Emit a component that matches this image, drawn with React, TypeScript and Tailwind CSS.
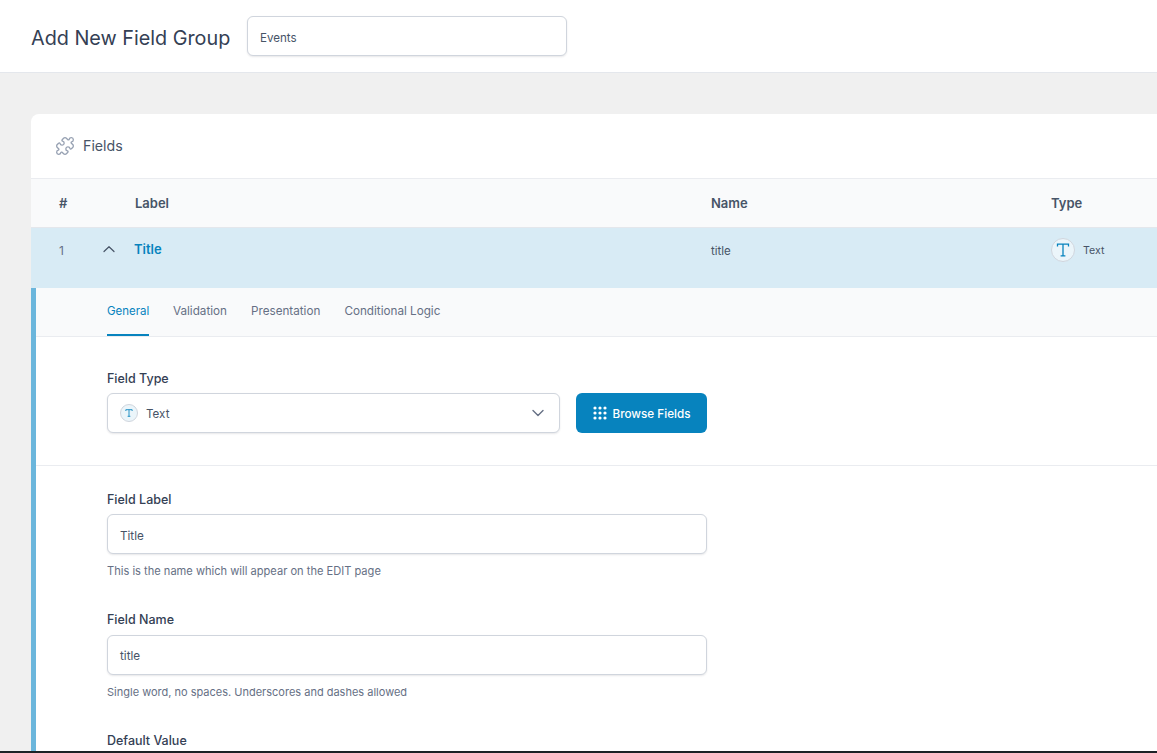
import React from "react";
import { Puzzle } from "lucide-react";

const font = { fontFamily: "Inter, 'Noto Sans', sans-serif" };

function TextIcon({ big }: { big?: boolean }) {
  const size = big ? "w-[24px] h-[24px]" : "w-[18px] h-[18px]";
  return (
    <span className={`${size} shrink-0 rounded-full bg-[#ebf5fa] border border-[#d0d5dd] flex items-center justify-center`}>
      <svg width={big ? 14 : 8} height={big ? 14 : 8} viewBox="0 0 14 14" fill="none" stroke="#0783be" strokeWidth={big ? 1.3 : 1.5}>
        <path d="M1.5 3.5V1.2h11v2.3M7 1.2v11.6M4.6 12.8h4.8" />
      </svg>
    </span>
  );
}

function Field({ label, value, help, boxClass, helpSize }: { label: string; value: string; help: string; boxClass: string; helpSize: string }) {
  return (
    <div className="flex flex-col">
      <div className="text-[12.5px] leading-[16px] font-medium text-[#344054]">{label}</div>
      <div className={`${boxClass} w-[600px] h-[40px] px-[12px] flex items-center bg-white border border-[#d0d5dd] rounded-[6px] shadow-[0_1px_2px_rgba(16,24,40,0.1)] text-[11.7px] text-[#475467]`}>
        {value}
      </div>
      <div className={`mt-[9px] ${helpSize} leading-[16px] text-[#667085]`}>{help}</div>
    </div>
  );
}

export default function App() {
  return (
    <div style={font} className="w-[1157px] h-[753px] overflow-hidden bg-[#f0f0f0] border-b-2 border-[#1d2327] flex flex-col">
      <header className="h-[73px] shrink-0 bg-white border-b border-[#e4e7ec] flex items-center pl-[31px]">
        <h1 className="text-[19.8px] leading-[28px] font-normal text-[#344054] w-[216px] mt-[3px]">Add New Field Group</h1>
        <div className="-mt-[1px] w-[320px] h-[40px] pt-[6px] px-[12px] flex items-center bg-white border border-[#d0d5dd] rounded-[6px] shadow-[0_1px_2px_rgba(16,24,40,0.1)] text-[11.6px] text-[#475467]">
          Events
        </div>
      </header>

      <main className="mt-[41px] ml-[31px] flex-1 min-h-0 bg-white rounded-tl-[8px] flex flex-col overflow-hidden">
        <div className="h-[65px] shrink-0 flex items-center pl-[24px] border-b border-[#eaecf0]">
          <Puzzle size={20} color="#98a2b3" strokeWidth={1.6} />
          <span className="ml-[8px] text-[14.2px] text-[#475467]">Fields</span>
        </div>

        <div className="h-[49px] shrink-0 pt-[1px] bg-[#f9fafb] flex items-center text-[13px] font-semibold text-[#475467] border-b border-[#e4e7ec]">
          <span className="w-[104px] pl-[28px]">#</span>
          <span className="w-[576px]">Label</span>
          <span className="w-[340px]">Name</span>
          <span>Type</span>
        </div>

        <div className="h-[60px] shrink-0 bg-[#d8ebf5] flex items-start pt-[13px] text-[12px] text-[#667085]">
          <span className="w-[72px] pl-[28px] leading-[18px] mt-[1px]">1</span>
          <svg className="mt-[2px]" width="12" height="12" viewBox="0 0 12 12" fill="none" stroke="#475467" strokeWidth="1.2" strokeLinecap="round" strokeLinejoin="round">
            <path d="M1 8.5 6 3.7l5 4.8" />
          </svg>
          <span className="ml-[19px] -mt-[1px] w-[577px] text-[13px] leading-[18px] font-semibold text-[#0783be]">Title</span>
          <span className="w-[340px] leading-[18px] mt-[1px] text-[11.5px] text-[#475467]">title</span>
          <span className="flex items-center gap-[8px] -mt-[3px] text-[#475467]">
            <TextIcon big />
            <span className="text-[10.6px] mt-[1px]">Text</span>
          </span>
        </div>

        <div className="flex-1 min-h-0 border-l-[5px] border-[#6bb6dc] flex flex-col">
          <div className="h-[49px] shrink-0 bg-[#f9fafb] border-b border-[#eaecf0] flex pl-[71px] gap-[24px] text-[11.7px] text-[#667085]">
            <span className="w-[42px] h-[48px] pt-[1px] flex items-center whitespace-nowrap text-[11.5px] text-[#0783be] border-b-2 border-[#0783be]">General</span>
            <span className="h-[48px] flex items-center">Validation</span>
            <span className="h-[48px] flex items-center">Presentation</span>
            <span className="h-[48px] flex items-center">Conditional Logic</span>
          </div>

          <div className="h-[129px] shrink-0 border-b border-[#eaecf0] pl-[71px] pt-[34px]">
            <div className="text-[12.5px] leading-[16px] font-medium text-[#344054]">Field Type</div>
            <div className="mt-[6px] flex gap-[16px]">
              <div className="w-[453px] h-[40px] pl-[12px] pr-[14px] flex items-center gap-[8px] bg-white border border-[#d0d5dd] rounded-[6px] shadow-[0_1px_2px_rgba(16,24,40,0.1)] text-[11.6px] text-[#475467]">
                <TextIcon />
                <span className="flex-1 pt-[3px]">Text</span>
                <svg width="14" height="14" viewBox="0 0 14 14" fill="none" stroke="#667085" strokeWidth="1.4" strokeLinecap="round" strokeLinejoin="round">
                  <path d="M2 4.5 7 9.5l5-5" />
                </svg>
              </div>
              <div className="w-[131px] h-[40px] pr-[1px] bg-[#0783be] rounded-[6px] flex items-center justify-center gap-[5px] text-[11.7px] font-medium text-white">
                <svg width="16" height="16" viewBox="0 0 16 16" fill="#fff">
                  <circle cx="3" cy="3" r="1.6" /><circle cx="8" cy="3" r="1.6" /><circle cx="13" cy="3" r="1.6" />
                  <circle cx="3" cy="8" r="1.6" /><circle cx="8" cy="8" r="1.6" /><circle cx="13" cy="8" r="1.6" />
                  <circle cx="3" cy="13" r="1.6" /><circle cx="8" cy="13" r="1.6" /><circle cx="13" cy="13" r="1.6" />
                </svg>
                <span className="pt-[4px]">Browse Fields</span>
              </div>
            </div>
          </div>

          <div className="pl-[71px] pt-[26px] flex flex-col gap-[33px]">
            <Field label="Field Label" value="Title" boxClass="mt-[6px] pt-[5px]" helpSize="text-[11.1px]" help="This is the name which will appear on the EDIT page" />
            <Field label="Field Name" value="title" boxClass="mt-[7px] pt-[3px]" helpSize="text-[11px]" help="Single word, no spaces. Underscores and dashes allowed" />
            <div className="text-[12.5px] leading-[16px] font-medium text-[#344054]">Default Value</div>
          </div>
        </div>
      </main>
    </div>
  );
}
